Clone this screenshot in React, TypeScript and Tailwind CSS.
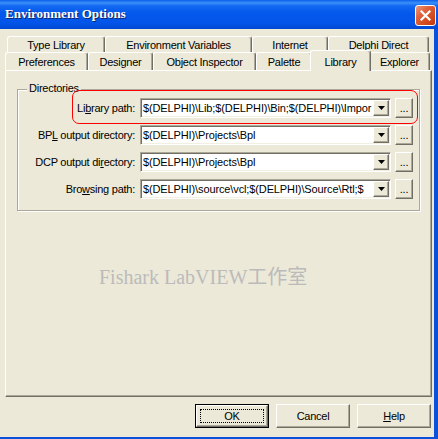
import React from "react";

const raised =
  "border border-t-white border-l-white border-r-[#716F64] border-b-[#716F64] shadow-[inset_-1px_-1px_0_#ACA899] bg-[#ECE9D8]";
const sunken =
  "border border-t-[#ACA899] border-l-[#ACA899] border-r-white border-b-white shadow-[inset_1px_1px_0_#716F64,inset_-1px_-1px_0_#F1EFE2]";

function Tab({ w, children, selected }: { w: string; children: React.ReactNode; selected?: boolean }) {
  if (selected) {
    return (
      <div
        className={`${w} h-[21px] -mx-[2px] -mb-[1px] relative z-10 flex justify-center items-start pt-[3px] bg-[#ECE9D8] rounded-t-[3px] border-t border-l border-r border-t-white border-l-white border-r-[#716F64] shadow-[inset_-1px_0_0_#ACA899]`}
      >
        {children}
      </div>
    );
  }
  return (
    <div
      className={`${w} h-full flex justify-center items-center pt-[1px] bg-[#ECE9D8] rounded-t-[3px] border-t border-l border-r border-t-white border-l-white border-r-[#716F64] shadow-[inset_-1px_0_0_#ACA899]`}
    >
      {children}
    </div>
  );
}

function Combo({ text }: { text: string }) {
  return (
    <div className={`w-[251px] h-[20px] flex bg-white p-[1px] ${sunken}`}>
      <div className="flex-1 overflow-hidden whitespace-nowrap pl-[1px] leading-[16px] tracking-[-0.12px] text-black">{text}</div>
      <div className={`w-[16px] h-[16px] flex items-center justify-center ${raised}`}>
        <svg width="7" height="4" viewBox="0 0 7 4">
          <polygon points="0,0 7,0 3.5,4" fill="#000" />
        </svg>
      </div>
    </div>
  );
}

function Ellipsis() {
  return (
    <div className={`w-[18px] h-[20px] flex items-center justify-center pt-[1px] leading-none ${raised}`}>
      ...
    </div>
  );
}

function Row({ label, text }: { label: React.ReactNode; text: string }) {
  return (
    <div className="flex items-center h-[20px]">
      <div className="w-[117px] text-right whitespace-nowrap">{label}</div>
      <div className="ml-[5px]">
        <Combo text={text} />
      </div>
      <div className="ml-[4px]">
        <Ellipsis />
      </div>
    </div>
  );
}

function Button({ children, def }: { children: React.ReactNode; def?: boolean }) {
  if (def) {
    return (
      <div className="w-[74px] h-[24px] border border-black">
        <div className={`w-full h-full flex items-center justify-center p-[3px] ${raised}`}>
          <div className="w-full h-full flex items-center justify-center border border-dotted border-black">
            {children}
          </div>
        </div>
      </div>
    );
  }
  return (
    <div className={`w-[74px] h-[24px] flex items-center justify-center ${raised}`}>{children}</div>
  );
}

export default function App() {
  return (
    <div className="w-[438px] h-[439px] bg-[#0A50D8] flex flex-col overflow-hidden font-['Liberation_Sans',Arial,sans-serif] text-[11px] tracking-[-0.25px] text-black">
      {/* Title bar */}
      <div className="h-[29px] shrink-0 flex items-center justify-between pl-[5px] pr-[2px] bg-[linear-gradient(to_bottom,#0A5FEA_0%,#3D8FF8_10%,#1369F2_20%,#0558EC_45%,#0255E8_80%,#0048D4_100%)]">
        <div className="text-white font-bold text-[13px] tracking-normal font-['Liberation_Serif','Noto_Sans_CJK_TC',serif] [text-shadow:1px_1px_0_#0A246A] -mt-[1px]">
          Environment Options
        </div>
        <div className="w-[21px] h-[21px] mt-[1px] rounded-[3px] border border-white flex items-center justify-center bg-[linear-gradient(135deg,#E99A7E_0%,#E0623C_35%,#D24A1E_70%,#C0380E_100%)]">
          <svg width="11" height="11" viewBox="0 0 11 11">
            <path d="M1.5 1.5 L9.5 9.5 M9.5 1.5 L1.5 9.5" stroke="#fff" strokeWidth="2.2" strokeLinecap="square" />
          </svg>
        </div>
      </div>

      {/* Body */}
      <div className="flex-1 flex mb-[2px]">
        <div className="w-[434px] h-full bg-[#ECE9D8] flex flex-col pt-[7px]">
          {/* Tab row 1 */}
          <div className="flex h-[16px] ml-[7px]">
            <Tab w="w-[98px]">Type Library</Tab>
            <Tab w="w-[147px]">Environment Variables</Tab>
            <Tab w="w-[76px]">Internet</Tab>
            <Tab w="w-[101px]">Delphi Direct</Tab>
          </div>
          {/* Tab row 2 */}
          <div className="flex items-end h-[18px] ml-[5px] relative z-10">
            <Tab w="w-[83px]">Preferences</Tab>
            <Tab w="w-[65px]">Designer</Tab>
            <Tab w="w-[103px]">Object Inspector</Tab>
            <Tab w="w-[56px]">Palette</Tab>
            <Tab w="w-[61px]" selected>
              Library
            </Tab>
            <Tab w="w-[61px]">Explorer</Tab>
          </div>
          {/* Panel */}
          <div className="ml-[5px] w-[427px] h-[327px] border border-t-white border-l-white border-r-[#716F64] border-b-[#716F64] shadow-[inset_-1px_-1px_0_#ACA899] flex flex-col">
            {/* Group box */}
            <div className="relative mt-[18px] mx-[11px] border border-[#ACA899] shadow-[1px_1px_0_#fff,inset_1px_1px_0_#fff] pt-[8px] pb-[11px] flex flex-col gap-[7px]">
              <div className="absolute left-[9px] -top-[8px] px-[2px] bg-[#ECE9D8] leading-[13px]">Directories</div>
              <Row
                label={
                  <>
                    Li<u>b</u>rary path:
                  </>
                }
                text="$(DELPHI)\Lib;$(DELPHI)\Bin;$(DELPHI)\Impor"
              />
              <Row
                label={
                  <>
                    BP<u>L</u> output directory:
                  </>
                }
                text="$(DELPHI)\Projects\Bpl"
              />
              <Row
                label={
                  <>
                    DCP output di<u>r</u>ectory:
                  </>
                }
                text="$(DELPHI)\Projects\Bpl"
              />
              <Row
                label={
                  <>
                    Bro<u>w</u>sing path:
                  </>
                }
                text="$(DELPHI)\source\vcl;$(DELPHI)\Source\Rtl;$"
              />
              <div className="absolute left-[54px] top-0 w-[346px] h-[34px] border border-[#FF0000] rounded-[7px] pointer-events-none" />
            </div>
            {/* Watermark */}
            <div className="mt-[54px] ml-[93px] text-[20px] leading-[24px] tracking-normal text-[#BBBBBB] font-['Liberation_Serif','Noto_Sans_CJK_TC',serif] whitespace-nowrap">
              Fishark LabVIEW工作室
            </div>
          </div>
          {/* Buttons */}
          <div className="flex justify-end gap-[7px] mt-[7px] pr-[3px]">
            <Button def>OK</Button>
            <Button>Cancel</Button>
            <Button>
              <u>H</u>elp
            </Button>
          </div>
        </div>
        <div className="flex-1" />
      </div>
    </div>
  );
}
